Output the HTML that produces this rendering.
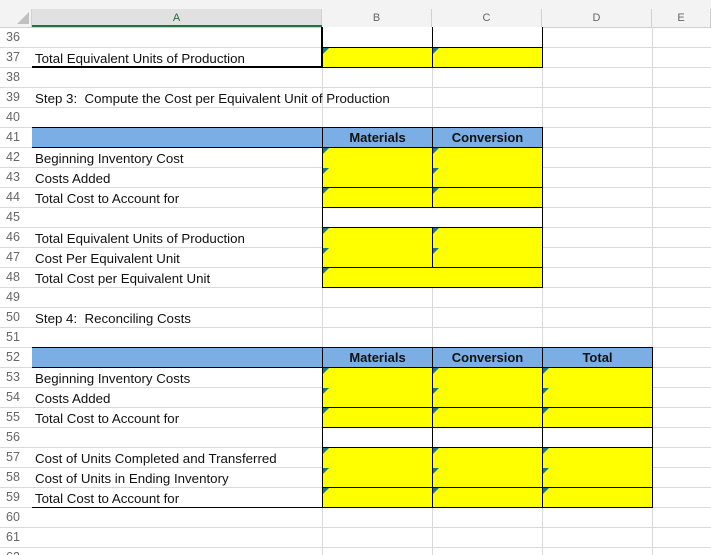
<!DOCTYPE html>
<html><head><style>
html,body{margin:0;width:711px;height:555px;overflow:hidden}
body{background:#fff;font-family:"Liberation Sans",sans-serif;position:relative}
div{position:absolute;box-sizing:border-box}
.vl{top:9px;width:1px;height:546px;background:#d9d9d9}
.hl{left:0;width:711px;height:1px;background:#d9d9d9}
.rn{left:6px;font-size:12.5px;color:#666;width:24px;height:20px;line-height:20px}
.t{left:35px;font-size:13.3px;color:#111;height:20px;line-height:21px;white-space:nowrap}
.y{background:#ffff00;border:1px solid #000}
.w{background:#fff;border:1px solid #000}
.b{background:#7aaee4;border:1px solid #000}
.h{font-size:13px;text-align:center;line-height:19px;color:#111;font-weight:bold}
.c{width:0;height:0;border-top:6px solid #1a7a8a;border-right:6px solid transparent}
.ch{top:9px;height:18px;font-size:11px;color:#666;text-align:center;line-height:18px;background:#f3f3f3;border-right:1px solid #d0d0d0}
</style></head><body>
<div style="left:0;top:0;width:711px;height:27px;background:#f3f3f3"></div>
<div style="left:0;top:9px;width:32px;height:18px;background:#f3f3f3;border-right:1px solid #d0d0d0"></div>
<div style="left:17px;top:12px;width:0;height:0;border-left:12px solid transparent;border-bottom:12px solid #c0c0c0"></div>
<div class="ch" style="left:32px;width:290px;background:#e1e1e1;color:#1e6b40">A</div>
<div style="left:32px;top:25px;width:290px;height:2px;background:#217346"></div>
<div class="ch" style="left:322px;width:110px">B</div>
<div class="ch" style="left:432px;width:110px">C</div>
<div class="ch" style="left:542px;width:110px">D</div>
<div class="ch" style="left:652px;width:59px">E</div>
<div style="left:0;top:27px;width:711px;height:1px;background:#d0d0d0"></div>

<div class="vl" style="left:322px;top:27px"></div><div class="vl" style="left:432px;top:27px"></div><div class="vl" style="left:542px;top:27px"></div><div class="vl" style="left:652px;top:27px"></div>
<div class="hl" style="top:47px"></div><div class="hl" style="top:67px"></div><div class="hl" style="top:87px"></div><div class="hl" style="top:107px"></div><div class="hl" style="top:127px"></div><div class="hl" style="top:147px"></div><div class="hl" style="top:167px"></div><div class="hl" style="top:187px"></div><div class="hl" style="top:207px"></div><div class="hl" style="top:227px"></div><div class="hl" style="top:247px"></div><div class="hl" style="top:267px"></div><div class="hl" style="top:287px"></div><div class="hl" style="top:307px"></div><div class="hl" style="top:327px"></div><div class="hl" style="top:347px"></div><div class="hl" style="top:367px"></div><div class="hl" style="top:387px"></div><div class="hl" style="top:407px"></div><div class="hl" style="top:427px"></div><div class="hl" style="top:447px"></div><div class="hl" style="top:467px"></div><div class="hl" style="top:487px"></div><div class="hl" style="top:507px"></div><div class="hl" style="top:527px"></div><div class="hl" style="top:547px"></div>

<div class="rn" style="top:27px">36</div><div class="rn" style="top:47px">37</div><div class="rn" style="top:67px">38</div><div class="rn" style="top:87px">39</div><div class="rn" style="top:107px">40</div><div class="rn" style="top:127px">41</div><div class="rn" style="top:147px">42</div><div class="rn" style="top:167px">43</div><div class="rn" style="top:187px">44</div><div class="rn" style="top:207px">45</div><div class="rn" style="top:227px">46</div><div class="rn" style="top:247px">47</div><div class="rn" style="top:267px">48</div><div class="rn" style="top:287px">49</div><div class="rn" style="top:307px">50</div><div class="rn" style="top:327px">51</div><div class="rn" style="top:347px">52</div><div class="rn" style="top:367px">53</div><div class="rn" style="top:387px">54</div><div class="rn" style="top:407px">55</div><div class="rn" style="top:427px">56</div><div class="rn" style="top:447px">57</div><div class="rn" style="top:467px">58</div><div class="rn" style="top:487px">59</div><div class="rn" style="top:507px">60</div><div class="rn" style="top:527px">61</div><div class="rn" style="top:547px">62</div>

<div style="left:32px;top:66px;width:291px;height:2px;background:#000"></div>
<div style="left:321px;top:27px;width:2px;height:41px;background:#000"></div>
<div class="w" style="left:322px;top:27px;width:111px;height:21px;border-top:none"></div>
<div class="w" style="left:432px;top:27px;width:111px;height:21px;border-top:none"></div>
<div class="y" style="left:322px;top:47px;width:111px;height:21px"></div>
<div class="y" style="left:432px;top:47px;width:111px;height:21px"></div>
<div class="c" style="left:323px;top:48px"></div><div class="c" style="left:433px;top:48px"></div>
<div class="t" style="top:48px">Total Equivalent Units of Production</div>
<div class="t" style="top:88px">Step 3:&nbsp; Compute the Cost per Equivalent Unit of Production</div>

<div class="b" style="left:32px;top:127px;width:291px;height:21px;border-left:none"></div>
<div class="b h" style="left:322px;top:127px;width:111px;height:21px">Materials</div>
<div class="b h" style="left:432px;top:127px;width:111px;height:21px">Conversion</div>
<div class="y" style="left:322px;top:147px;width:111px;height:41px"></div>
<div class="y" style="left:432px;top:147px;width:111px;height:41px"></div>
<div class="y" style="left:322px;top:187px;width:111px;height:21px"></div>
<div class="y" style="left:432px;top:187px;width:111px;height:21px"></div>
<div class="w" style="left:322px;top:207px;width:221px;height:21px"></div>
<div class="y" style="left:322px;top:227px;width:111px;height:41px"></div>
<div class="y" style="left:432px;top:227px;width:111px;height:41px"></div>
<div class="y" style="left:322px;top:267px;width:221px;height:21px"></div>
<div class="c" style="left:323px;top:148px"></div><div class="c" style="left:433px;top:148px"></div>
<div class="c" style="left:323px;top:168px"></div><div class="c" style="left:433px;top:168px"></div>
<div class="c" style="left:323px;top:188px"></div><div class="c" style="left:433px;top:188px"></div>
<div class="c" style="left:323px;top:228px"></div><div class="c" style="left:433px;top:228px"></div>
<div class="c" style="left:323px;top:248px"></div><div class="c" style="left:433px;top:248px"></div>
<div class="c" style="left:323px;top:268px"></div>
<div class="t" style="top:148px">Beginning Inventory Cost</div>
<div class="t" style="top:168px">Costs Added</div>
<div class="t" style="top:188px">Total Cost to Account for</div>
<div class="t" style="top:228px">Total Equivalent Units of Production</div>
<div class="t" style="top:248px">Cost Per Equivalent Unit</div>
<div class="t" style="top:268px">Total Cost per Equivalent Unit</div>
<div class="t" style="top:308px">Step 4:&nbsp; Reconciling Costs</div>

<div class="b" style="left:32px;top:347px;width:291px;height:21px;border-left:none"></div>
<div class="b h" style="left:322px;top:347px;width:111px;height:21px">Materials</div>
<div class="b h" style="left:432px;top:347px;width:111px;height:21px">Conversion</div>
<div class="b h" style="left:542px;top:347px;width:111px;height:21px">Total</div>
<div class="y" style="left:322px;top:367px;width:111px;height:41px"></div>
<div class="y" style="left:432px;top:367px;width:111px;height:41px"></div>
<div class="y" style="left:542px;top:367px;width:111px;height:41px"></div>
<div class="y" style="left:322px;top:407px;width:111px;height:21px"></div>
<div class="y" style="left:432px;top:407px;width:111px;height:21px"></div>
<div class="y" style="left:542px;top:407px;width:111px;height:21px"></div>
<div class="w" style="left:322px;top:427px;width:111px;height:21px"></div>
<div class="w" style="left:432px;top:427px;width:111px;height:21px"></div>
<div class="w" style="left:542px;top:427px;width:111px;height:21px"></div>
<div class="y" style="left:322px;top:447px;width:111px;height:41px"></div>
<div class="y" style="left:432px;top:447px;width:111px;height:41px"></div>
<div class="y" style="left:542px;top:447px;width:111px;height:41px"></div>
<div class="y" style="left:322px;top:487px;width:111px;height:21px"></div>
<div class="y" style="left:432px;top:487px;width:111px;height:21px"></div>
<div class="y" style="left:542px;top:487px;width:111px;height:21px"></div>
<div style="left:32px;top:507px;width:291px;height:1px;background:#000"></div>
<div class="c" style="left:323px;top:368px"></div><div class="c" style="left:433px;top:368px"></div><div class="c" style="left:543px;top:368px"></div>
<div class="c" style="left:323px;top:388px"></div><div class="c" style="left:433px;top:388px"></div><div class="c" style="left:543px;top:388px"></div>
<div class="c" style="left:323px;top:408px"></div><div class="c" style="left:433px;top:408px"></div><div class="c" style="left:543px;top:408px"></div>
<div class="c" style="left:323px;top:448px"></div><div class="c" style="left:433px;top:448px"></div><div class="c" style="left:543px;top:448px"></div>
<div class="c" style="left:323px;top:468px"></div><div class="c" style="left:433px;top:468px"></div><div class="c" style="left:543px;top:468px"></div>
<div class="c" style="left:323px;top:488px"></div><div class="c" style="left:433px;top:488px"></div><div class="c" style="left:543px;top:488px"></div>
<div class="t" style="top:368px">Beginning Inventory Costs</div>
<div class="t" style="top:388px">Costs Added</div>
<div class="t" style="top:408px">Total Cost to Account for</div>
<div class="t" style="top:448px">Cost of Units Completed and Transferred</div>
<div class="t" style="top:468px">Cost of Units in Ending Inventory</div>
<div class="t" style="top:488px">Total Cost to Account for</div>
</body></html>
